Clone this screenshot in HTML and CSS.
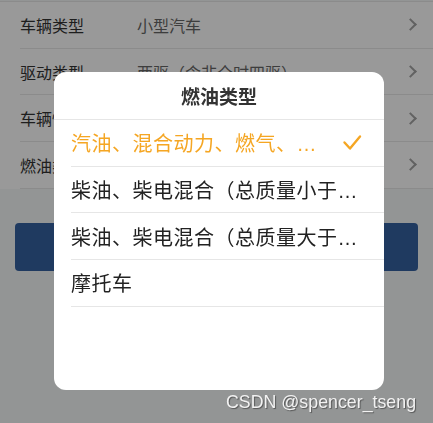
FILE: index.html
```html
<!DOCTYPE html>
<html lang="zh-CN">
  <head>
    <meta charset="UTF-8" />
    <meta name="viewport" content="width=device-width, initial-scale=1.0" />
    <title>燃油类型</title>
    <link rel="stylesheet" href="styles.css">
  </head>
  <body>
    <div class="form">
      <div class="row">
        <span class="label">车辆类型</span>
        <span class="value">小型汽车</span>
        <span class="arrow"></span>
      </div>
      <div class="row">
        <span class="label">驱动类型</span>
        <span class="value">两驱（含非全时四驱）</span>
        <span class="arrow"></span>
      </div>
      <div class="row">
        <span class="label">车辆性质</span>
        <span class="value">非营运</span>
        <span class="arrow"></span>
      </div>
      <div class="row">
        <span class="label">燃油类型</span>
        <span class="value">汽油、混合动力</span>
        <span class="arrow"></span>
      </div>
    </div>

    <div class="footer">
      <button class="submit">确定</button>
    </div>

    <!-- picker popup -->
    <div class="mask"></div>
    <div class="picker">
      <div class="picker-title">燃油类型</div>
      <ul class="options">
        <li class="option active">
          <span class="option-text">汽油、混合动力、燃气、纯电动、插电式混合动力</span>
          <svg class="check" width="20" height="20" viewBox="0 0 20 20">
            <polyline points="2.5,9.5 8,15.5 18,3.5" fill="none" stroke="#f5a623" stroke-width="2.4" stroke-linecap="round" stroke-linejoin="round" />
          </svg>
        </li>
        <li class="option">
          <span class="option-text">柴油、柴电混合（总质量小于等于3.5吨）</span>
        </li>
        <li class="option">
          <span class="option-text">柴油、柴电混合（总质量大于3.5吨）</span>
        </li>
        <li class="option">
          <span class="option-text">摩托车</span>
        </li>
      </ul>
    </div>

    <div class="watermark">CSDN @spencer_tseng</div>
  </body>
</html>
```

FILE: styles.css
```css
* {
  box-sizing: border-box;
}

body {
  margin: 0;
  height: 423px;
  overflow: hidden;
  background: #f5f9f9;
  font-family: "Noto Sans CJK SC", sans-serif;
}

/* Form list */
.form {
  margin-top: 1px;
  padding-left: 20px;
  background: #fff;
  border-top: 1px solid #e8e8e8;
}

.row {
  display: flex;
  align-items: center;
  height: 46.7px;
  padding-right: 18px;
  border-bottom: 1px solid #e8e8e8;
  font-size: 16px;
}

.row .label {
  width: 117px;
  color: #333;
}

.row .value {
  flex: 1;
  color: #666;
  white-space: nowrap;
}

.arrow {
  width: 9px;
  height: 9px;
  border-top: 2px solid #a3a3a3;
  border-right: 2px solid #a3a3a3;
  transform: rotate(45deg);
}

.footer {
  padding: 34px 15px 0;
}

.submit {
  width: 100%;
  height: 48px;
  border: 0;
  border-radius: 4px;
  background: #3561a0;
  color: #fff;
  font-size: 17px;
  font-family: inherit;
}

/* Popup */
.mask {
  position: fixed;
  inset: 0;
  background: rgba(0, 0, 0, 0.4);
}

.picker {
  position: fixed;
  left: 54px;
  top: 72px;
  width: 330px;
  height: 318px;
  background: #fff;
  border-radius: 12px;
  overflow: hidden;
}

.picker-title {
  height: 48px;
  line-height: 48px;
  text-align: center;
  font-size: 19px;
  font-weight: bold;
  color: #333;
  border-bottom: 1px solid #e6e6e6;
}

.options {
  margin: 0;
  padding: 0 0 0 17px;
  list-style: none;
}

.option {
  display: flex;
  align-items: center;
  height: 46.7px;
  padding-right: 22px;
  border-bottom: 1px solid #e6e6e6;
  font-size: 20px;
  color: #222;
}

.option-text {
  flex: 1;
  min-width: 0;
  padding-right: 3px;
  white-space: nowrap;
  overflow: hidden;
  text-overflow: ellipsis;
  letter-spacing: 0.5px;
  font-family: "Liberation Sans", "Noto Sans CJK SC", sans-serif;
}

.option.active {
  color: #f5a623;
}

.check {
  flex: none;
  margin-left: 21px;
}

.watermark {
  position: fixed;
  left: 226px;
  top: 392px;
  font-family: "Liberation Sans", Arial, sans-serif;
  font-size: 17.8px;
  color: #f2f2f2;
  text-shadow: 1px 1px 1px #555;
}
```
